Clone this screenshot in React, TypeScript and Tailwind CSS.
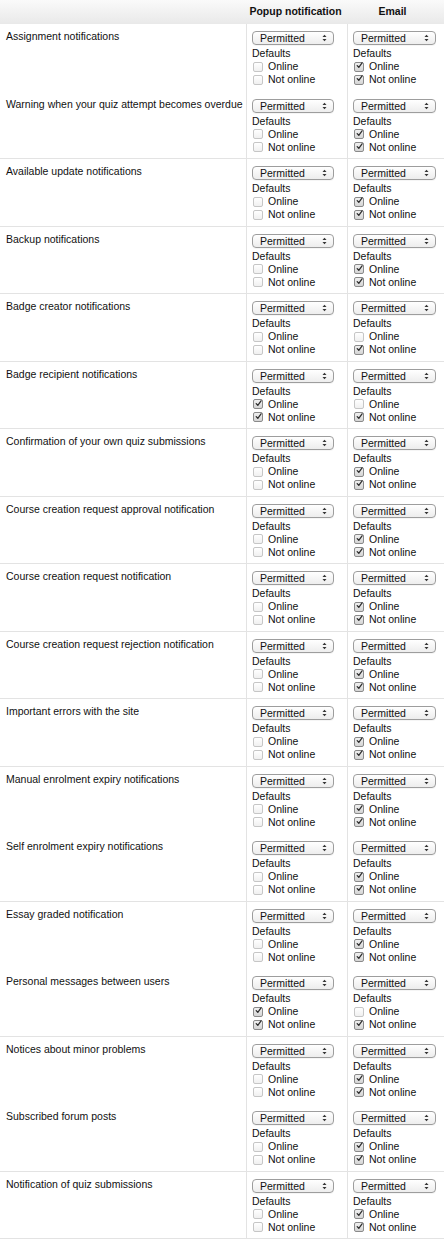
import React from 'react';

type Item = { label: string; popup: [boolean, boolean]; email: [boolean, boolean] };

const N: [boolean, boolean] = [false, false];
const B: [boolean, boolean] = [true, true];
const O: [boolean, boolean] = [false, true];

const groups: Item[][] = [
  [
    { label: 'Assignment notifications', popup: N, email: B },
    { label: 'Warning when your quiz attempt becomes overdue', popup: N, email: B },
  ],
  [{ label: 'Available update notifications', popup: N, email: B }],
  [{ label: 'Backup notifications', popup: N, email: B }],
  [{ label: 'Badge creator notifications', popup: N, email: O }],
  [{ label: 'Badge recipient notifications', popup: B, email: O }],
  [{ label: 'Confirmation of your own quiz submissions', popup: N, email: B }],
  [{ label: 'Course creation request approval notification', popup: N, email: B }],
  [{ label: 'Course creation request notification', popup: N, email: B }],
  [{ label: 'Course creation request rejection notification', popup: N, email: B }],
  [{ label: 'Important errors with the site', popup: N, email: B }],
  [
    { label: 'Manual enrolment expiry notifications', popup: N, email: B },
    { label: 'Self enrolment expiry notifications', popup: N, email: B },
  ],
  [
    { label: 'Essay graded notification', popup: N, email: B },
    { label: 'Personal messages between users', popup: B, email: O },
  ],
  [
    { label: 'Notices about minor problems', popup: N, email: B },
    { label: 'Subscribed forum posts', popup: N, email: B },
  ],
  [{ label: 'Notification of quiz submissions', popup: N, email: B }],
];

function Select({ width }: { width: string }) {
  return (
    <div
      className={`${width} h-[14px] flex items-center justify-between rounded-[4px] border border-[#9d9d9d] bg-gradient-to-b from-white to-[#ededed] pl-[7px] pr-[6px] shadow-[0_1px_0_rgba(0,0,0,0.04)]`}
    >
      <span className="leading-[12px] text-[#111]">Permitted</span>
      <svg width="5" height="8" viewBox="0 0 5 8">
        <path d="M0.5 3 L2.5 0.8 L4.5 3 Z" fill="#333" />
        <path d="M0.5 5 L2.5 7.2 L4.5 5 Z" fill="#333" />
      </svg>
    </div>
  );
}

function Check({ on, text }: { on: boolean; text: string }) {
  return (
    <div className="flex items-center h-[13px] leading-[13px]">
      <span
        className={`ml-[1px] w-[10px] h-[10px] rounded-[2px] border flex items-center justify-center ${
          on ? 'border-[#8a8a8a] bg-gradient-to-b from-[#f0f0f0] to-[#d4d4d4]' : 'border-[#c6c6c6] bg-gradient-to-b from-white to-[#f0f0f0]'
        }`}
      >
        {on && (
          <svg width="9" height="9" viewBox="0 0 9 9" className="-mt-[2px] ml-[1px]">
            <path d="M1.6 4.6 L3.6 7 L7.8 1" fill="none" stroke="#2f2f2f" strokeWidth="1.6" strokeLinecap="round" strokeLinejoin="round" />
          </svg>
        )}
      </span>
      <span className="ml-[5px] text-[#111]">{text}</span>
    </div>
  );
}

function Cell({ values, width }: { values: [boolean, boolean]; width: string }) {
  return (
    <div className="border-l border-[#e3e3e3] pl-[5px] pt-[7px]">
      <Select width={width} />
      <div className="mt-[2px] leading-[13px] text-[#111]">Defaults</div>
      <Check on={values[0]} text="Online" />
      <Check on={values[1]} text="Not online" />
    </div>
  );
}

export default function App() {
  return (
    <div className="w-[444px] bg-white font-['Liberation_Sans',Arial,sans-serif] text-[10.5px] text-[#111]">
      <div className="grid grid-cols-[246px_101px_97px] h-[24px] items-center bg-gradient-to-b from-[#fafafa] to-[#e9e9e9] font-bold">
        <div />
        <div className="text-center pr-[2px]">Popup notification</div>
        <div className="text-center pr-[6px]">Email</div>
      </div>
      {groups.map((g, gi) => (
        <div key={gi}>
          {g.map((it, i) => (
            <div
              key={it.label}
              className={`grid grid-cols-[246px_101px_97px] h-[67.5px] ${i === g.length - 1 ? 'border-b border-[#e3e3e3]' : ''}`}
            >
              <div className="pl-[6px] pt-[6px] leading-[13px] whitespace-nowrap overflow-hidden">{it.label}</div>
              <Cell values={it.popup} width="w-[82px]" />
              <Cell values={it.email} width="w-[83px]" />
            </div>
          ))}
        </div>
      ))}
    </div>
  );
}
